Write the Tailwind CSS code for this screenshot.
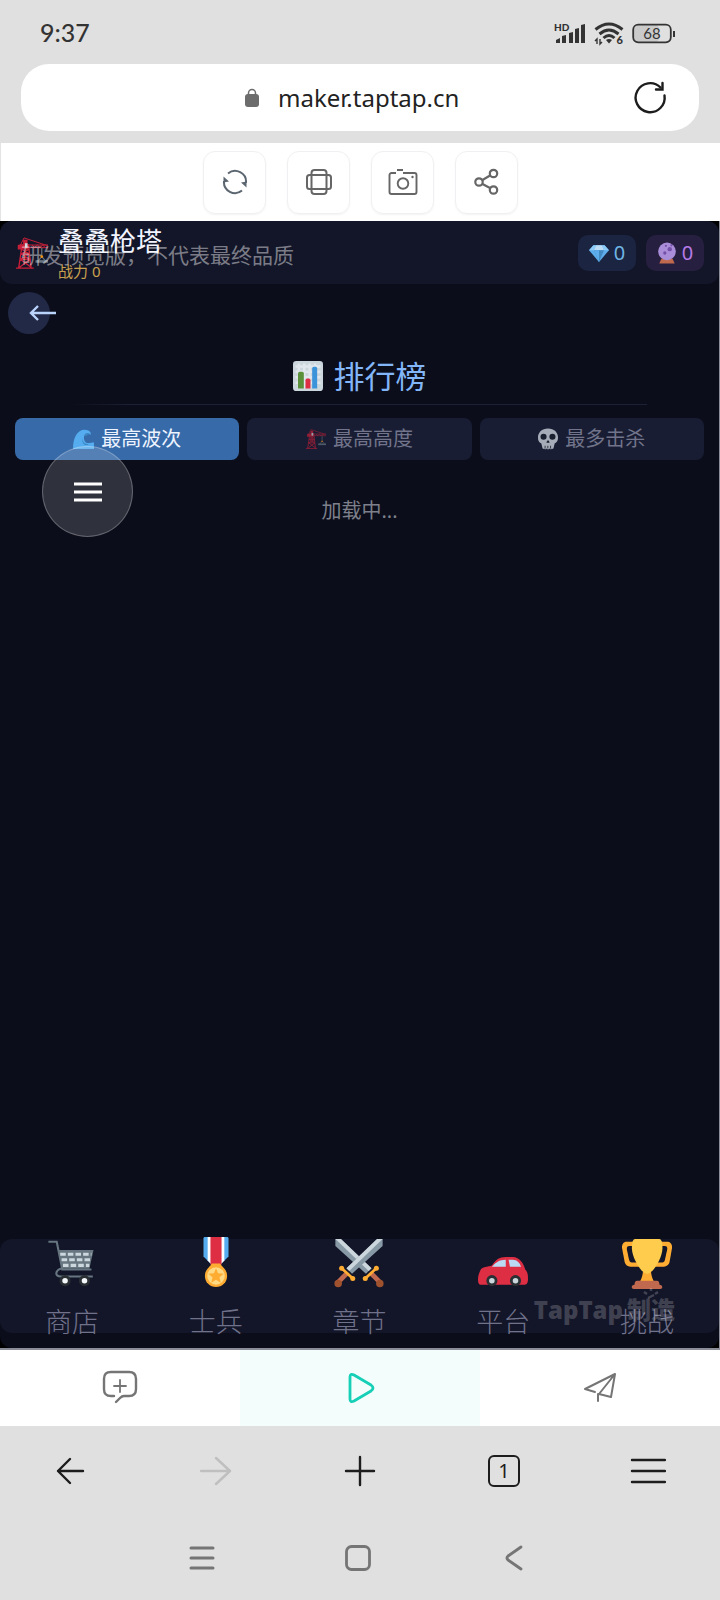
<!DOCTYPE html>
<html lang="zh-CN">
<head>
  <meta charset="UTF-8" />
  <meta name="viewport" content="width=device-width, initial-scale=1.0" />
  <title>叠叠枪塔 - 排行榜</title>
  <script src="https://cdn.jsdelivr.net/npm/@tailwindcss/browser@4"></script>
</head>
<body class="bg-[#e0e0e0] min-h-screen flex flex-col font-['Noto_Sans','Noto_Sans_CJK_SC',sans-serif]">

  <!-- crane is used twice, header and tab -->
  <svg class="hidden">
    <symbol id="crane" viewBox="0 0 36 36">
      <g fill="none" stroke="#c81f38" stroke-width="1.500">
        <path d="M7 8L3 35M14 8l3 27M6 19h9M5 25h11M7 14l8 5-10 6 12 9M14 14l-8 5 10 6-12 9M0 35h20" />
        <path d="M3 9h33M3 12h33M5 9l4-8 27 9M18 9l3 3 3-3 3 3 3-3 3 3" stroke-width="1.100" />
      </g>
      <path fill="#c81f38" d="M2 9h12v5H2zM8 3h5v6H8z" />
      <path fill="#ccd6dd" d="M10 7h3v5h-3z" />
      <path d="M29 12v9M24 28l5-6 5 6" fill="none" stroke="#66757f" stroke-width="1.300" />
      <path fill="#66757f" d="M22 26h14v3H22z" />
      <circle cx="29" cy="22" r="1.500" fill="#f4900c" />
    </symbol>
  </svg>

  <!-- status bar -->
  <div class="h-16 pl-10 pr-11 flex items-center justify-between text-[#333]">
    <time class="text-[25px] leading-8 font-medium font-[Lato,sans-serif]">9:37</time>
    <div class="flex items-center gap-2 pt-1">
      <svg class="w-8 h-6" viewBox="0 0 32 24" fill="#333">
        <text x="0" y="9" font-size="10" font-weight="900" font-family="Lato, sans-serif">HD</text>
        <path d="M2 21v-3l4-2v5zM8 21v-7l4-1v8zM15 21V11l4-1v11zM21 21V7l4-1v15zM27 21V3l4-1v19z" />
      </svg>
      <svg class="w-[30px] h-6" viewBox="0 0 30 24" fill="none" stroke="#333">
        <path d="M1.500 7.500Q15-3.500 28.500 7.500M5.500 12Q15 4 24.500 12M9.500 16Q15 11 20.500 16" stroke-width="3" />
        <path d="M12 18q3-2 6 0l-3 3.500z" fill="#333" stroke="none" />
        <path d="M3 22v-5l-2 2M6 17v5l2-2" stroke-width="1.400" />
        <text x="22.500" y="22" font-size="11" font-weight="900" fill="#333" stroke="none" font-family="Lato, sans-serif">6</text>
      </svg>
      <svg class="w-11 h-6" viewBox="0 0 44 24">
        <rect x="2" y="3" width="25" height="17" rx="4" fill="#cacaca" />
        <rect x="1.200" y="2.700" width="37.600" height="17.600" rx="5" fill="none" stroke="#333" stroke-width="1.800" />
        <path d="M41 9h2v6h-2z" fill="#333" />
        <text x="20" y="17" text-anchor="middle" font-size="15" fill="#333" font-family="Lato, sans-serif">68</text>
      </svg>
    </div>
  </div>

  <!-- address bar -->
  <div class="px-[21px] pb-3">
    <div class="h-[67px] bg-white rounded-[28px] flex items-center pl-[59px] pr-[31px]">
      <label class="flex-1 flex items-center justify-center gap-[18px]">
        <svg class="w-4 h-5" viewBox="0 0 16 20">
          <rect x="1" y="6" width="14" height="13" rx="3" fill="#6c6c6c" />
          <path d="M4.500 7V5a3.500 3.500 0 0 1 7 0v2" fill="none" stroke="#6c6c6c" stroke-width="1.500" />
        </svg>
        <input type="text" aria-label="网址" value="maker.taptap.cn" class="w-[190px] text-[24px] leading-8 text-[#222] font-['Noto_Sans',sans-serif] outline-none" />
      </label>
      <button aria-label="刷新">
        <svg class="w-9 h-9" viewBox="0 0 36 36" fill="none" stroke="#1d1d1d" stroke-width="2.400" stroke-linecap="round">
          <path d="M32.500 15.500A14.500 14.500 0 1 1 28.500 7.500" />
          <path d="M30.500 3v6.500H24" />
        </svg>
      </button>
    </div>
  </div>

  <!-- preview toolbar -->
  <div class="h-[78px] bg-white flex justify-center items-center gap-[21px] border-l border-[#e4e4e4]">
    <button aria-label="重新加载" class="w-[63px] h-[63px] rounded-xl border border-[#f0f0f2] shadow-xs flex items-center justify-center">
      <svg class="w-7 h-7" viewBox="0 0 28 28" fill="none" stroke="#5c6670" stroke-width="2">
        <path d="M7 5.500A11 11 0 0 1 25 15M21 22.500A11 11 0 0 1 3 13" />
        <path d="M20 14.500l5.500-1v6zM8 13.500l-5.500 1v-6z" fill="#5c6670" stroke="none" />
      </svg>
    </button>
    <button aria-label="旋转屏幕" class="w-[63px] h-[63px] rounded-xl border border-[#f0f0f2] shadow-xs flex items-center justify-center">
      <svg class="w-7 h-7" viewBox="0 0 28 28" fill="none" stroke="#666" stroke-width="2">
        <rect x="6.500" y="2" width="15" height="24" rx="3" />
        <rect x="2" y="7" width="24" height="14" rx="2.500" />
      </svg>
    </button>
    <button aria-label="截图" class="w-[63px] h-[63px] rounded-xl border border-[#f0f0f2] shadow-xs flex items-center justify-center">
      <svg class="w-[30px] h-7" viewBox="0 0 30 28" fill="none" stroke="#666" stroke-width="1.900">
        <path d="M8 5H3.500A2 2 0 0 0 1.500 7v17a2 2 0 0 0 2 2h23a2 2 0 0 0 2-2V7a2 2 0 0 0-2-2H15M9 2h6" />
        <circle cx="15" cy="15.500" r="5.300" />
        <circle cx="24.500" cy="9" r="1.200" fill="#666" stroke="none" />
      </svg>
    </button>
    <button aria-label="分享" class="w-[63px] h-[63px] rounded-xl border border-[#f0f0f2] shadow-xs flex items-center justify-center">
      <svg class="w-7 h-7" viewBox="0 0 28 28" fill="none" stroke="#666" stroke-width="2.200">
        <circle cx="6" cy="14" r="3.700" /><circle cx="20.500" cy="5.500" r="3.700" /><circle cx="20.500" cy="22" r="3.700" />
        <path d="M9.500 12l7.500-4.500M9.500 16l7.500 4" />
      </svg>
    </button>
  </div>

  <!-- game -->
  <div class="flex-1 flex flex-col bg-black border-r border-b-2 border-[#8b8d98]">
    <main class="relative flex-1 flex flex-col bg-[#0b0d1a] rounded-xl">
      <header class="relative h-[63px] shrink-0 pl-4 pr-[15px] flex items-center bg-[#131628] rounded-xl">
        <svg class="w-8 h-9"><use href="#crane" /></svg>
        <div class="flex-1 pl-[10px] pt-1">
          <h1 class="text-[26px] leading-8 text-[#f2f4ff]">叠叠枪塔</h1>
          <p class="text-[15px] leading-7 text-[#c9a04e]">战力 0</p>
        </div>
        <div class="flex gap-[10px]">
          <div class="h-9 w-[58px] rounded-[10px] bg-[#1b2440] flex items-center justify-center gap-[5px] text-xl leading-7 text-[#6fb4e4]">
            <svg class="w-5 h-5" viewBox="0 0 36 36">
              <path fill="#5dadec" d="M8 4h20l8 9-18 21L0 13z" />
              <path fill="#8ccaf7" d="M8 4L0 13h9l4-9zM28 4l8 9h-9l-4-9z" />
              <path fill="#bdddf4" d="M13 4L9 13h18l-4-9z" />
              <path fill="#4289c1" d="M9 13l9 21 9-21z" />
              <path fill="#5dadec" d="M9 13l9 21V13z" />
            </svg>0
          </div>
          <div class="h-9 w-[58px] rounded-[10px] bg-[#271f40] flex items-center justify-center gap-[5px] text-xl leading-7 text-[#b57be6]">
            <svg class="w-5 h-[22px]" viewBox="0 0 36 40">
              <path fill="#c1694f" d="M8 30h20l4 9H4z" />
              <circle cx="18" cy="17" r="16" fill="#aa8dd8" />
              <g fill="#7450a8"><circle cx="23" cy="13" r="4" /><circle cx="14" cy="20" r="3" /><circle cx="16" cy="7" r="2" /><circle cx="26" cy="6" r="2" /></g>
            </svg>0
          </div>
        </div>
        <p class="absolute left-[21px] top-5 text-[21px] leading-7 text-white/45">研发预览版，不代表最终品质</p>
      </header>

      <div class="px-2 pt-2">
        <button aria-label="返回" class="block w-[42px] h-[42px] rounded-full bg-[#222947] pl-[21px]">
          <svg class="w-7 h-5 max-w-none" viewBox="0 0 28 20" fill="none" stroke="#b9d3fb" stroke-width="2.400">
            <path d="M27 10H3M9 3l-7 7 7 7" />
          </svg>
        </button>
      </div>

      <h2 class="pt-5 flex justify-center items-center gap-[11px] text-[31px] leading-[44px] text-[#82b6f8]">
        <svg class="w-[30px] h-[30px]" viewBox="0 0 36 36">
          <rect width="36" height="36" rx="4" fill="#ccd6dd" />
          <path d="M3 6.500h30M3 13h30M3 19.500h30M3 26h30M7 3v30M13.500 3v30M20 3v30M26.500 3v30" stroke="#e1e8ed" stroke-width="3" />
          <path fill="#5c913b" d="M6 33V15q0-2 2-2h3q2 0 2 2v18z" />
          <path fill="#dd2e44" d="M15 33V23q0-2 2-2h2q2 0 2 2v10z" />
          <path fill="#3b94d9" d="M23 33V9q0-2 2-2h2q2 0 2 2v24z" />
        </svg>排行榜
      </h2>
      <div class="mt-[6px] mx-[10%] h-px bg-linear-to-r from-transparent via-[#1c2136] via-10% to-[#1c2136]"></div>

      <div class="pt-[13px] px-[15px] grid grid-cols-3 gap-2 text-xl leading-7">
        <button class="h-[42px] rounded-lg bg-[#376aa8] text-[#edf3ff] flex items-center justify-center gap-[7px]">
          <svg class="w-[21px] h-5" viewBox="0 0 36 34">
            <path fill="#55acee" d="M0 34C0 15 7 1 20 1c8 0 12 5 10 9-2-3-8-3-10 0-3 6 0 14 6 14 4 0 6-1 10-1v11z" />
            <path fill="#3b88c3" d="M16 16c1 8 6 11 12 9-6 5-13 1-12-9zM20 10c3-5 9-2 10 0-4-2-7 0-7 3z" />
          </svg>最高波次
        </button>
        <button class="h-[42px] rounded-lg bg-[#181d33] text-[#71748a] flex items-center justify-center gap-[7px]">
          <svg class="w-5 h-5 opacity-70"><use href="#crane" /></svg>最高高度
        </button>
        <button class="h-[42px] rounded-lg bg-[#181d33] text-[#71748a] flex items-center justify-center gap-[7px]">
          <svg class="w-5 h-[22px]" viewBox="0 0 36 38">
            <path fill="#a6adb8" d="M18 0C7 0 0 7 0 16c0 7 2 9 6 11l2 8q1 3 3 1 2 3 4 0 3 3 6 0 2 3 4 0 2 2 3-1l2-8c4-2 6-4 6-11C36 7 29 0 18 0z" />
            <g fill="#1b2030"><circle cx="10" cy="15" r="5.500" /><circle cx="26" cy="15" r="5.500" /><path d="M18 21l3 4q-2 2-3 0-1 2-3 0zM12 31h1.500v5H12zM17 31h1.500v5H17zM22 31h1.500v5H22z" /></g>
          </svg>最多击杀
        </button>
      </div>

      <p class="pt-[37px] text-center text-xl leading-7 text-[#7d808b]">加载中...</p>

      <!-- floating menu -->
      <button aria-label="菜单" class="absolute left-[42px] top-[225px] w-[91px] h-[91px] rounded-full bg-white/15 border border-white/25 flex items-center justify-center">
        <svg class="w-7 h-5" viewBox="0 0 28 20" stroke="#fff" stroke-width="3"><path d="M0 2h28M0 10h28M0 18h28" /></svg>
      </button>

      <nav class="relative mt-auto mb-[15px] h-[94px] bg-[#131628] rounded-xl grid grid-cols-5 text-[27px] leading-10 text-[#70718a] font-light">
        <a href="#shop" class="flex flex-col items-center gap-[13px]">
          <svg class="w-[50px] h-[50px]" viewBox="0 0 36 36">
            <path d="M1 2h6l4 20h21M11 21c-5 1-6 6-1 6h23" fill="none" stroke="#66757f" stroke-width="1.500" />
            <path fill="#66757f" d="M8 8h25.500l-3 13.500H11z" />
            <path d="M9.500 11h22.500M10.500 15h21M11.500 19h19" stroke="#ccd6dd" stroke-width="2.200" stroke-dasharray="4 1.500" />
            <g fill="#f5f8fa" stroke="#292f33" stroke-width="2"><circle cx="13" cy="30" r="3" /><circle cx="27" cy="30" r="3" /></g>
          </svg>
          <span>商店</span>
        </a>
        <a href="#soldiers" class="flex flex-col items-center gap-[13px]">
          <svg class="w-[50px] h-[50px] -mt-0.5 mb-0.5" viewBox="0 0 36 36">
            <path fill="#55acee" d="M9 1q0-1 1-1h16q1 0 1 1v13l-5 5h-8l-5-5z" />
            <path fill="#fff" d="M12 0h12v17l-2 2h-8l-2-2z" />
            <path fill="#dd2e44" d="M14 0h8v20h-8z" />
            <path fill="#ffac33" d="M15 19h6l2 3H13z" />
            <circle cx="18" cy="28" r="8" fill="#ffac33" />
            <circle cx="18" cy="28" r="6.300" fill="#ffd983" />
            <path fill="#ffac33" d="M18 22.500l1.500 3.600 4 .3-3 2.600.9 3.900-3.400-2.100-3.400 2.100.9-3.900-3-2.600 4-.3z" />
          </svg>
          <span>士兵</span>
        </a>
        <a href="#chapters" class="flex flex-col items-center gap-[13px]">
          <svg class="w-[50px] h-[50px]" viewBox="0 0 36 36">
            <g id="sword">
              <path fill="#8899a6" d="M1 0h4l22 21-4 4L1 5z" />
              <path fill="#ccd6dd" d="M5 0l22 21-2 2L1 0z" />
              <path d="M27 25l6 6" stroke="#c1694f" stroke-width="3.400" />
              <circle cx="33" cy="32" r="2.700" fill="#a0522f" />
              <path d="M22.500 28.500l8-7.500" stroke="#ffac33" stroke-width="2" />
              <g fill="#ffac33"><circle cx="22.500" cy="28.500" r="1.800" /><circle cx="30.500" cy="21" r="1.800" /></g>
            </g>
            <use href="#sword" transform="translate(36 0) scale(-1 1)" />
          </svg>
          <span>章节</span>
        </a>
        <a href="#platform" class="flex flex-col items-center gap-[13px]">
          <svg class="w-[50px] h-[50px]" viewBox="0 0 36 36">
            <path fill="#dd2e44" d="M0 29c0-3 1-5 2-7 1-2 5-2 8-3 3-4 5-6 10-6h5c5 0 8 5 9 9 2 2 2 4 2 7 0 3-1 4-3 4H2q-2 0-2-4z" />
            <path fill="#bbdaf4" d="M10 20c3-3 5-5 10-5v5zM22 15h3c3 0 5 2 6 5h-8z" />
            <g fill="#ccd6dd" stroke="#292f33" stroke-width="2"><circle cx="10" cy="30" r="3" /><circle cx="27" cy="30" r="3" /></g>
          </svg>
          <span>平台</span>
        </a>
        <a href="#challenge" class="flex flex-col items-center gap-[13px]">
          <svg class="w-[50px] h-[50px]" viewBox="0 0 36 36">
            <path fill="#ffac33" d="M5.123 5h6C12.227 5 13 4.896 13 6V4c0-1.104-.773-2-1.877-2h-8c-2 0-3.583 2.125-3 5 0 0 1.791 9.375 1.917 9.958C2.373 18.500 4.164 20 6.081 20h6.958c1.105 0-.039-1.896-.039-3v-2c0 1.104-.773 2-1.877 2h-4c-1.104 0-1.833-1.042-2-2S3.539 7.667 3.539 7.667C3.206 5.750 4.018 5 5.123 5zm25.812 0h-6C23.831 5 22 4.896 22 6V4c0-1.104 1.831-2 2.935-2h8c2 0 3.584 2.125 3 5 0 0-1.633 9.419-1.771 10-.354 1.500-2.042 3-4 3h-7.146C21.914 20 22 18.104 22 17v-2c0 1.104 1.831 2 2.935 2h4c1.104 0 1.834-1.042 2-2s1.584-7.333 1.584-7.333C32.851 5.750 32.040 5 30.935 5zM20.832 22c0-6.958-2.709 0-2.709 0s-3-6.958-3 0-3.291 10-3.291 10h12.292s-3.292-3.042-3.292-10z" />
            <path fill="#ffcc4d" d="M29.123 6.577c0 6.775-6.770 18.423-11 18.423-4.231 0-11-11.649-11-18.423 0-5.577 1-6.577 3-6.577h16c2 0 3 1 3 6.577z" />
            <path fill="#c1694f" d="M11 30h14q2 0 2 3 2 0 2 2 0 1-1.500 1h-19Q7 36 7 35q0-2 2-2 0-3 2-3z" />
          </svg>
          <span>挑战</span>
        </a>
      </nav>

      <!-- watermark -->
      <div class="absolute right-11 bottom-5 flex items-center gap-1 text-white/20 font-black text-[24px] leading-9">
        <span class="font-['Open_Sans',sans-serif]">TapTap</span>
        <span class="relative">制造
          <svg class="absolute left-4 -top-1 w-4 h-3" viewBox="0 0 16 12" stroke="#fff" stroke-opacity=".2" stroke-width="2.500"><path d="M8 0v3M1 4l3 2M15 4l-3 2M5 10l6-3" /></svg>
        </span>
      </div>
    </main>
  </div>

  <!-- preview tabs -->
  <div class="h-[76px] bg-white grid grid-cols-3">
    <button aria-label="评论" class="flex items-center justify-center">
      <svg class="w-9 h-9" viewBox="0 0 36 36" fill="none" stroke="#757575" stroke-width="2.400" stroke-linecap="round">
        <path d="M12 26H9q-7 0-7-7V9q0-7 7-7h18q7 0 7 7v10q0 7-7 7h-5q-2 0-4 2l-4 4" />
        <path d="M18 10v12M12 16h12" stroke-width="1.800" />
      </svg>
    </button>
    <button aria-label="运行" class="flex items-center justify-center bg-[#f2fdfc]">
      <svg class="w-[30px] h-8" viewBox="0 0 30 32" fill="none" stroke="#15cfb6" stroke-width="2.800" stroke-linejoin="round">
        <path d="M5 5q0-4 4-2l17 10q4 3 0 6L9 29q-4 2-4-2z" />
      </svg>
    </button>
    <button aria-label="发布" class="flex items-center justify-center">
      <svg class="w-9 h-9" viewBox="0 0 36 36" fill="none" stroke="#757575" stroke-width="2" stroke-linejoin="round" stroke-linecap="round">
        <path d="M13 22L3 19 33 4l-4 23-12-3L33 4M16 24v7" />
      </svg>
    </button>
  </div>

  <!-- browser controls -->
  <nav class="h-[90px] grid grid-cols-5 text-[#1d1d1d]">
    <button aria-label="后退" class="flex items-center justify-center">
      <svg class="w-8 h-8" viewBox="0 0 32 32" fill="none" stroke="currentColor" stroke-width="2.400" stroke-linecap="round" stroke-linejoin="round"><path d="M27 16H2M14 4L2 16l12 12" /></svg>
    </button>
    <button aria-label="前进" disabled class="flex items-center justify-center text-[#bfbfbf]">
      <svg class="w-8 h-8" viewBox="0 0 32 32" fill="none" stroke="currentColor" stroke-width="2.400" stroke-linecap="round" stroke-linejoin="round"><path d="M1 16h29M16 3l14 13-14 13" /></svg>
    </button>
    <button aria-label="新标签页" class="flex items-center justify-center">
      <svg class="w-8 h-8" viewBox="0 0 32 32" stroke="currentColor" stroke-width="2.400" stroke-linecap="round"><path d="M16 2v28M2 16h28" /></svg>
    </button>
    <button aria-label="标签页" class="flex items-center justify-center">
      <span class="w-8 h-8 border-2 border-current rounded-md flex items-center justify-center text-xl leading-7">1</span>
    </button>
    <button aria-label="更多" class="flex items-center justify-center">
      <svg class="w-9 h-7" viewBox="0 0 36 28" stroke="currentColor" stroke-width="2.400" stroke-linecap="round"><path d="M2 3h33M2 14h33M2 25h33" /></svg>
    </button>
  </nav>

  <!-- system navigation -->
  <nav class="h-[84px] pr-[5px] flex items-center justify-center gap-32 text-[#757575]">
    <button aria-label="最近任务">
      <svg class="block w-7 h-7" viewBox="0 0 28 28" stroke="currentColor" stroke-width="3" stroke-linecap="round"><path d="M3 4h22M3 14h22M3 24h22" /></svg>
    </button>
    <button aria-label="主屏幕">
      <svg class="block w-7 h-7" viewBox="0 0 28 28" fill="none" stroke="currentColor" stroke-width="2.800"><rect x="2.500" y="2.500" width="23" height="23" rx="5" /></svg>
    </button>
    <button aria-label="返回上一级">
      <svg class="block w-7 h-7" viewBox="0 0 28 28" fill="none" stroke="currentColor" stroke-width="2.800" stroke-linecap="round" stroke-linejoin="round"><path d="M21 3L8 12q-2 2 0 4l13 9" /></svg>
    </button>
  </nav>
</body>
</html>
